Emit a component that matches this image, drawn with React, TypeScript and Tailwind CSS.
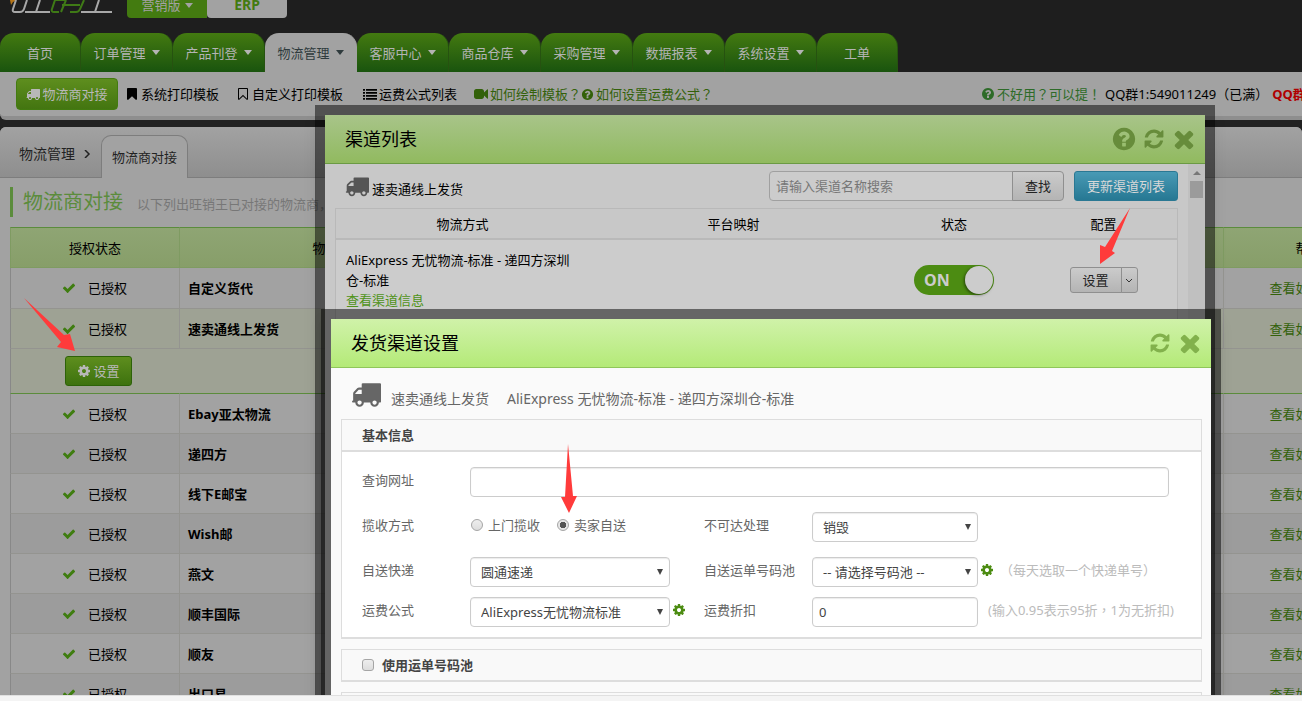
import type { ReactNode } from "react";

const icons = {
  check:
    "M1671 566q0 40-28 68l-724 724-136 136q-28 28-68 28t-68-28l-136-136-362-362q-28-28-28-68t28-68l136-136q28-28 68-28t68 28l294 295 656-657q28-28 68-28t68 28l136 136q28 28 28 68z",
  times:
    "M1490 1322q0 40-28 68l-136 136q-28 28-68 28t-68-28l-294-294-294 294q-28 28-68 28t-68-28l-136-136q-28-28-28-68t28-68l294-294-294-294q-28-28-28-68t28-68l136-136q28-28 68-28t68 28l294 294 294-294q28-28 68-28t68 28l136 136q28 28 28 68t-28 68l-294 294 294 294q28 28 28 68z",
  refresh:
    "M1639 1056q0 5-1 7-64 268-268 434.5t-478 166.5q-146 0-282.5-55t-243.5-157l-129 129q-19 19-45 19t-45-19-19-45v-448q0-26 19-45t45-19h448q26 0 45 19t19 45-19 45l-137 137q71 66 161 102t187 36q134 0 250-65t186-179q11-17 53-117 8-23 30-23h192q13 0 22.5 9.5t9.5 22.5zm25-800v448q0 26-19 45t-45 19h-448q-26 0-45-19t-19-45 19-45l138-138q-148-137-349-137-134 0-250 65t-186 179q-11 17-53 117-8 23-30 23h-199q-13 0-22.5-9.5t-9.5-22.5v-7q65-268 270-434.5t480-166.5q146 0 284 55.5t245 156.5l130-129q19-19 45-19t45 19 19 45z",
  cog:
    "M1152 896q0-106-75-181t-181-75-181 75-75 181 75 181 181 75 181-75 75-181zm512-109v222q0 12-8 23t-20 13l-185 28q-19 54-39 91 35 50 107 138 10 12 10 25t-9 23q-27 37-99 108t-94 71q-12 0-26-9l-138-108q-44 23-91 38-16 136-29 186-7 28-36 28h-222q-14 0-24.5-8.5t-11.5-21.5l-28-184q-49-16-90-37l-141 107q-10 9-25 9-14 0-25-11-126-114-165-168-7-10-7-23 0-12 8-23 15-21 51-66.5t54-70.5q-27-50-41-99l-183-27q-13-2-21-12.5t-8-23.5v-222q0-12 8-23t19-13l186-28q14-46 39-92-40-57-107-138-10-12-10-24 0-10 9-23 26-36 98.5-107.5t94.5-71.5q13 0 26 10l138 107q44-23 91-38 16-136 29-186 7-28 36-28h222q14 0 24.5 8.5t11.5 21.5l28 184q49 16 90 37l142-107q9-9 24-9 13 0 25 10 129 119 165 170 7 8 7 22 0 12-8 23-15 21-51 66.5t-54 70.5q26 50 41 98l183 28q13 2 21 12.5t8 23.5z",
  question:
    "M1024 1376v-192q0-14-9-23t-23-9h-192q-14 0-23 9t-9 23v192q0 14 9 23t23 9h192q14 0 23-9t9-23zm256-672q0-88-55.5-163t-138.5-116-170-41q-243 0-371 213-15 24 8 42l132 100q7 6 19 6 16 0 25-12 53-68 86-92 34-24 86-24 48 0 85.5 26t37.5 59q0 38-20 61t-68 45q-63 28-115.5 86.5t-52.5 125.5v36q0 14 9 23t23 9h192q14 0 23-9t9-23q0-19 21.5-49.5t54.5-49.5q32-18 49-28.5t46-35 44.5-48 28-60.5 12.5-81zm384 192q0 209-103 385.5t-279.5 279.5-385.5 103-385.5-103-279.5-279.5-103-385.5 103-385.5 279.5-279.5 385.5-103 385.5 103 279.5 279.5 103 385.5z",
  truck:
    "M640 1408q0-52-38-90t-90-38-90 38-38 90 38 90 90 38 90-38 38-90zm-384-512h384v-256h-158q-13 0-22 9l-195 195q-9 9-9 22v30zm1280 512q0-52-38-90t-90-38-90 38-38 90 38 90 90 38 90-38 38-90zm256-1088v1024q0 15-4 26.5t-13.5 18.5-16.5 11.5-23.5 6-22.5 2-25.5 0-22.5-.5q0 106-75 181t-181 75-181-75-75-181h-384q0 106-75 181t-181 75-181-75-75-181h-64q-3 0-22.5.5t-25.5 0-22.5-2-23.5-6-16.5-11.5-13.5-18.5-4-26.5q0-26 19-45t45-19v-320q0-8-.5-35t0-38 2.5-34.5 6.5-37 14-30.5 22.5-30l198-198q19-19 50.5-32t58.5-13h160v-192q0-26 19-45t45-19h1024q26 0 45 19t19 45z",
  bookmark:
    "M1420 128q23 0 44 9 33 13 52.5 41t19.5 62v1289q0 34-19.5 62t-52.5 41q-19 8-44 8-48 0-83-32l-441-424-441 424q-36 33-83 33-23 0-44-9-33-13-52.5-41t-19.5-62v-1289q0-34 19.5-62t52.5-41q21-9 44-9h1048z",
  bookmarkOpen:
    "M1408 256h-1024v1242l423-406 89-85 89 85 423 406v-1242zm12-128q23 0 44 9 33 13 52.5 41t19.5 62v1289q0 34-19.5 62t-52.5 41q-19 8-44 8-48 0-83-32l-441-424-441 424q-36 33-83 33-23 0-44-9-33-13-52.5-41t-19.5-62v-1289q0-34 19.5-62t52.5-41q21-9 44-9h1048z",
  list:
    "M0 256h256v224h-256zM0 640h256v224h-256zM0 1024h256v224h-256zM0 1408h256v224h-256zM384 256h1408v224h-1408zM384 640h1408v224h-1408zM384 1024h1408v224h-1408zM384 1408h1408v224h-1408z",
  video:
    "M1792 352v1088q0 42-39 59-13 5-25 5-27 0-45-19l-403-403v166q0 119-84.5 203.5t-203.5 84.5h-704q-119 0-203.5-84.5t-84.5-203.5v-704q0-119 84.5-203.5t203.5-84.5h704q119 0 203.5 84.5t84.5 203.5v165l403-402q18-19 45-19 12 0 25 5 39 17 39 59z",
};

function Icon({ name, className = "size-3.5" }: { name: keyof typeof icons; className?: string }) {
  return (
    <svg viewBox="0 0 1792 1792" fill="currentColor" aria-hidden="true" className={`shrink-0 ${className}`}>
      <path d={icons[name]} />
    </svg>
  );
}

function Caret({ className = "" }: { className?: string }) {
  return (
    <svg viewBox="0 0 8 5" fill="currentColor" aria-hidden="true" className={`h-[5px] w-2 shrink-0 ${className}`}>
      <path d="M0 0h8L4 5z" />
    </svg>
  );
}

const navTabs = [
  { label: "首页", menu: false },
  { label: "订单管理", menu: true },
  { label: "产品刊登", menu: true },
  { label: "物流管理", menu: true, active: true },
  { label: "客服中心", menu: true },
  { label: "商品仓库", menu: true },
  { label: "采购管理", menu: true },
  { label: "数据报表", menu: true },
  { label: "系统设置", menu: true },
  { label: "工单", menu: false },
];

const carriers = [
  "自定义货代",
  "速卖通线上发货",
  "Ebay亚太物流",
  "递四方",
  "线下E邮宝",
  "Wish邮",
  "燕文",
  "顺丰国际",
  "顺友",
  "出口易",
];

function Header() {
  return (
    <header className="shrink-0 bg-[#1e1e1e]">
      <div className="flex h-[33px] items-start">
        <svg viewBox="0 0 127 18" className="h-[18px] w-[127px] shrink-0" fill="none" role="img" aria-label="旺销王">
          <path d="M10 0h7l-4 2-2 3z" fill="#b5761a" />
          <g stroke="#a8a8a8" strokeWidth="2">
            <path d="M16 0l-3 9q-1 3 2 3h5q3 0 4-3l3-9" />
            <path d="M25 12h25M40 0l-4 12" />
            <path d="M81 12h31M99 0l-4 12" />
          </g>
          <path
            d="M55 0l-3 9q-1 3 2 3h5M66 0l-5 12M62 5h18M84 0l-4 9q-1 3-4 3h-6M55 0h10"
            stroke="#3f7a16"
            strokeWidth="2"
          />
        </svg>
        <div className="flex h-[18px] items-end">
          <button className="flex h-[26px] w-20 items-center justify-center gap-1 rounded-bl bg-[#437b10] text-[#a2a2a2]">
            营销版 <Caret />
          </button>
          <button className="h-[26px] w-20 rounded-b bg-[#a2a2a2] text-sm font-bold text-[#437b10]">ERP</button>
        </div>
      </div>
      <nav className="flex">
        {navTabs.map((tab) => (
          <a
            key={tab.label}
            href="#"
            className={`flex h-[39px] shrink-0 items-center justify-center gap-1.5 rounded-t-[14px] border-r ${
              tab.menu ? "w-[92px]" : "w-[81px]"
            } ${
              tab.active
                ? "border-[#a2a2a2] bg-[#a2a2a2] text-[#2f3b3d]"
                : "border-[#265210] bg-linear-to-b from-[#437a10] to-[#19540e] text-[#b4b4b4]"
            }`}
          >
            {tab.label}
            {tab.menu && <Caret />}
          </a>
        ))}
      </nav>
    </header>
  );
}

function Toolbar() {
  return (
    <div className="flex h-12 shrink-0 items-center rounded-bl-md border-b-4 border-[#8e8e8e] bg-[#a2a2a2] pl-4 whitespace-nowrap text-black">
      <a
        href="#"
        className="flex h-8 w-[102px] shrink-0 items-center justify-center gap-0.5 rounded border border-[#437b10] bg-linear-to-b from-[#5e8e1e] to-[#437510] text-[#b8b8b8]"
      >
        <Icon name="truck" />
        物流商对接
      </a>
      <a href="#" className="ml-[7px] flex items-center gap-0.5">
        <Icon name="bookmark" /> 系统打印模板
      </a>
      <a href="#" className="ml-[17px] flex items-center gap-0.5">
        <Icon name="bookmarkOpen" /> 自定义打印模板
      </a>
      <a href="#" className="ml-5 flex items-center gap-0.5">
        <Icon name="list" /> 运费公式列表
      </a>
      <a href="#" className="ml-[17px] flex items-center gap-0.5 text-[#33610a]">
        <Icon name="video" />
        <span>
          如何绘制模板<span className="font-['Noto_Sans_CJK_TC']">？</span>
        </span>
      </a>
      <a href="#" className="flex items-center gap-0.5 text-[#33610a]">
        <Icon name="question" className="size-[13px]" />
        <span>
          如何设置运费公式<span className="font-['Noto_Sans_CJK_TC']">？</span>
        </span>
      </a>
      <div className="ml-auto flex w-[321px] shrink-0 items-center gap-1">
        <a href="#" className="flex shrink-0 items-center gap-0.5 text-[#2d6b28]">
          <Icon name="question" />
          <span>
            不好用<span className="font-['Noto_Sans_CJK_TC']">？</span>可以提
            <span className="font-['Noto_Sans_CJK_TC']">！</span>
          </span>
        </a>
        <span className="shrink-0">QQ群1:549011249（已满）</span>
        <b className="shrink-0 text-[#b00000]">QQ群</b>
      </div>
    </div>
  );
}

function CarrierRow({ name, index }: { name: string; index: number }) {
  const tone =
    name === "速卖通线上发货" ? "bg-[#9ea294]" : index % 2 ? "bg-[#9c9c9c]" : "bg-[#a2a2a2]";
  const line =
    index === 0 ? "" : name === "Ebay亚太物流" ? "border-t border-[#5b8c3c]" : "border-t border-[#949490]";
  const cell = `h-10 ${line}`;

  return (
    <tr className={tone}>
      <td className={`${cell} border-l border-l-[#888]`}>
        <span className="flex items-center gap-3 pl-[51px]">
          <Icon name="check" className="size-3.5 text-[#3f7d10]" />
          已授权
        </span>
      </td>
      <td className={`${cell} border-l border-l-[#949490] pl-2 font-bold`}>{name}</td>
      <td className={cell} />
      <td className={`${cell} border-l border-l-[#949490] text-center`}>
        <a href="#" className="text-[#33610a]">查看如何授权</a>
      </td>
    </tr>
  );
}

function CarrierPanel() {
  return (
    <main className="mt-[7px] flex-1 rounded-t-md bg-[#a2a2a2]">
      <div className="flex h-[51px] items-end rounded-t-md border-b border-[#7d7d7d] bg-linear-to-b from-[#a2a2a2] to-[#8e8e8e] pl-[19px]">
        <div className="flex h-[46px] items-center gap-2 text-sm text-[#222]">
          物流管理
          <svg viewBox="0 0 8 8" className="size-2" fill="none" stroke="currentColor" strokeWidth="1.5" aria-hidden="true">
            <path d="M2 0l4 4-4 4" />
          </svg>
        </div>
        <div className="-mb-px ml-2.5 flex h-[43px] w-[87px] items-center justify-center rounded-t-[10px] border border-b-0 border-[#7d7d7d] bg-[#a2a2a2] text-[#222]">
          物流商对接
        </div>
      </div>
      <div className="px-2.5 pt-[9px]">
        <div className="flex h-[30px] items-center gap-3.5 border-l-3 border-[#5b8c3c] pl-2.5 whitespace-nowrap">
          <h1 className="text-xl text-[#5b8c3c]">物流商对接</h1>
          <p className="pt-1 text-[#777]">以下列出旺销王已对接的物流商，</p>
        </div>
        <table className="mt-2.5 w-[1383px] table-fixed border-separate border-spacing-0">
          <colgroup>
            <col className="w-[169px]" />
            <col className="w-[305px]" />
            <col />
            <col className="w-[170px]" />
          </colgroup>
          <thead>
            <tr className="bg-linear-to-b from-[#8fa574] to-[#879e69]">
              {["授权状态", "物流商", "", "帮助"].map((title, i) => (
                <th
                  key={i}
                  className={`h-[41px] border-y border-t-[#5b8c3c] border-b-[#7f9b62] font-normal ${
                    i === 2 ? "" : "border-l border-l-[#7f9b62]"
                  }`}
                >
                  {title}
                </th>
              ))}
            </tr>
          </thead>
          <tbody>
            {carriers.slice(0, 2).map((name, i) => (
              <CarrierRow key={name} name={name} index={i} />
            ))}
            <tr className="bg-[#9ea294]">
              <td colSpan={4} className="h-[45px] border-t border-l border-t-[#949490] border-l-[#888] pl-[54px]">
                <button className="flex h-[30px] w-[67px] items-center justify-center gap-0.5 rounded-[3px] border border-[#2d6208] bg-linear-to-b from-[#5e8e1e] to-[#3d720e] text-[#b8b8b8]">
                  <Icon name="cog" />
                  设置
                </button>
              </td>
            </tr>
            {carriers.slice(2).map((name, i) => (
              <CarrierRow key={name} name={name} index={i + 2} />
            ))}
          </tbody>
        </table>
      </div>
    </main>
  );
}

interface ModalHeadProps {
  title: string;
  className: string;
  iconClass: string;
  help?: boolean;
}

function ModalHead({ title, className, iconClass, help }: ModalHeadProps) {
  return (
    <div className={`flex h-[49px] shrink-0 items-center border-b bg-linear-to-b pr-1.5 pl-5 ${className}`}>
      <h2 className="flex-1 text-lg text-black">{title}</h2>
      <div className={`flex ${iconClass}`}>
        {help && (
          <button aria-label="帮助" className="flex w-[30px] items-center justify-center">
            <Icon name="question" className="size-[26px]" />
          </button>
        )}
        <button aria-label="刷新" className="flex w-[30px] items-center justify-center">
          <Icon name="refresh" className="size-[22px]" />
        </button>
        <button aria-label="关闭" className="flex w-[30px] items-center justify-center">
          <Icon name="times" className="size-7" />
        </button>
      </div>
    </div>
  );
}

function ChannelListModal() {
  return (
    <section className="absolute top-[105px] left-[315px] flex h-[600px] w-[900px] flex-col border-10 border-black/50 bg-[#c8c8c8] bg-clip-padding text-black shadow-lg">
      <ModalHead
        title="渠道列表"
        className="border-[#6b9a44] from-[#a8c489] to-[#91ba5f]"
        iconClass="text-[#678c3b]"
        help
      />
      <div className="flex flex-1">
        <div className="flex-1 pr-2.5 pl-2.5">
          <div className="flex h-11 items-center pl-2.5">
            <Icon name="truck" className="size-6 text-[#555]" />
            <span className="ml-[3px] pt-1.5">速卖通线上发货</span>
            <form className="ml-auto flex">
              <input
                type="text"
                aria-label="渠道名称"
                placeholder="请输入渠道名称搜索"
                className="h-[30px] w-[244px] rounded-l border border-[#a0a0a0] bg-[#ccc] px-1.5 placeholder:text-[#777]"
              />
              <button
                type="button"
                className="-ml-px h-[30px] w-[52px] rounded-r border border-[#8f8f8f] bg-linear-to-b from-[#cbcbcb] to-[#b4b4b4] text-[#222]"
              >
                查找
              </button>
            </form>
            <button className="ml-2.5 h-[30px] w-[104px] rounded-[3px] border border-[#2a7893] bg-linear-to-b from-[#489ab5] to-[#267893] text-[#d8d8d8]">
              更新渠道列表
            </button>
          </div>
          <table className="w-full table-fixed border-separate border-spacing-0 border-x border-t border-[#b9b9b9]">
            <colgroup>
              <col className="w-[253px]" />
              <col />
              <col className="w-[152px]" />
              <col className="w-[147px]" />
            </colgroup>
            <thead>
              <tr>
                {["物流方式", "平台映射", "状态", "配置"].map((title) => (
                  <th key={title} className="h-[31px] border-b-2 border-[#b9b9b9] font-normal">
                    {title}
                  </th>
                ))}
              </tr>
            </thead>
            <tbody>
              <tr className="bg-[#ccc]">
                <td className="px-2.5 py-2.5 leading-5">
                  AliExpress 无忧物流-标准 - 递四方深圳仓-标准
                  <br />
                  <a href="#" className="text-[#4f9318]">查看渠道信息</a>
                </td>
                <td />
                <td>
                  <button
                    role="switch"
                    aria-checked="true"
                    className="mx-auto flex h-[30px] w-20 items-center justify-between rounded-full bg-[#4c8c12] pr-px pl-2.5 text-base font-bold text-[#ccc]"
                  >
                    ON
                    <span className="size-7 rounded-full bg-[#ccc] shadow-[-1px_1px_3px_rgba(0,0,0,0.5)]" />
                  </button>
                </td>
                <td>
                  <div className="flex justify-center text-[#222]">
                    <button className="h-[26px] w-[52px] rounded-l-[3px] border border-[#8f8f8f] bg-linear-to-b from-[#cbcbcb] to-[#b4b4b4]">
                      设置
                    </button>
                    <button
                      aria-label="更多"
                      className="-ml-px flex h-[26px] w-[17px] items-center justify-center rounded-r-[3px] border border-[#8f8f8f] bg-linear-to-b from-[#cbcbcb] to-[#b4b4b4]"
                    >
                      <svg viewBox="0 0 8 8" className="size-2" fill="none" stroke="#333" aria-hidden="true">
                        <path d="M1 3l3 3 3-3" />
                      </svg>
                    </button>
                  </div>
                </td>
              </tr>
            </tbody>
          </table>
        </div>
        <div className="flex w-[17px] flex-col items-center bg-[#c0c0c0]">
          <svg viewBox="0 0 8 4" className="mt-[7px] h-1 w-2" fill="#777" aria-hidden="true">
            <path d="M4 0l4 4H0z" />
          </svg>
          <div className="mt-1.5 h-[17px] w-[13px] bg-[#9b9b9b]" />
        </div>
      </div>
    </section>
  );
}

interface SelectBoxProps {
  id: string;
  value: string;
  className: string;
}

function SelectBox({ id, value, className }: SelectBoxProps) {
  return (
    <div className={`relative ${className}`}>
      <select
        id={id}
        className="h-[30px] w-full appearance-none rounded border border-[#ccc] bg-white px-2.5 text-[#444] shadow-[inset_0_1px_1px_rgba(0,0,0,0.08)]"
      >
        <option>{value}</option>
      </select>
      <svg
        viewBox="0 0 6 6"
        className="pointer-events-none absolute top-3 right-[7px] size-1.5"
        fill="#444"
        aria-hidden="true"
      >
        <path d="M0 0h6L3 6z" />
      </svg>
    </div>
  );
}

function FieldLabel({ htmlFor, children }: { htmlFor: string; children: ReactNode }) {
  return (
    <label htmlFor={htmlFor} className="leading-[26px]">
      {children}
    </label>
  );
}

function Radio({ label, checked }: { label: string; checked?: boolean }) {
  return (
    <label className="flex items-center gap-[5px]">
      <input
        type="radio"
        name="pickup"
        defaultChecked={checked}
        className="size-3 appearance-none rounded-full border border-[#a5a5a5] bg-linear-to-b from-[#eee] to-[#ddd] checked:bg-[radial-gradient(circle,#555_0_3px,#e6e6e6_3px)]"
      />
      {label}
    </label>
  );
}

const textInput =
  "h-[30px] rounded border border-[#ccc] bg-white px-1.5 text-[#444] shadow-[inset_0_1px_1px_rgba(0,0,0,0.08)]";

function ChannelSettingsModal() {
  return (
    <section className="absolute top-[309px] left-[321px] h-[520px] w-[900px] border-10 border-black/50 bg-[#fafafa] bg-clip-padding text-[#666] shadow-lg">
      <ModalHead
        title="发货渠道设置"
        className="border-[#8fc65a] from-[#d0f2a9] to-[#b4ea77]"
        iconClass="text-[#82b14c]"
      />
      <div className="pr-[9px] pl-2.5">
        <div className="flex h-[51px] items-center pl-2.5 text-sm">
          <Icon name="truck" className="size-[30px]" />
          <span className="ml-2.5 pt-2.5">速卖通线上发货</span>
          <span className="ml-[18px] pt-2.5">AliExpress 无忧物流-标准 - 递四方深圳仓-标准</span>
        </div>

        <div className="border border-b-2 border-[#ddd] bg-white">
          <h3 className="flex h-8 items-center border-b-2 border-[#ddd] bg-[#f9f9f9] pl-5 font-bold text-[#444]">
            基本信息
          </h3>
          <div className="grid grid-cols-[108px_234px_108px_minmax(0,1fr)] pt-[15px] pr-8 pb-2.5 pl-5 whitespace-nowrap">
            <FieldLabel htmlFor="url">查询网址</FieldLabel>
            <input id="url" type="text" className={`col-span-3 mb-[15px] ${textInput}`} />

            <span className="leading-[26px]">揽收方式</span>
            <div className="flex h-[26px] items-center gap-[17px] pl-px">
              <Radio label="上门揽收" />
              <Radio label="卖家自送" checked />
            </div>
            <FieldLabel htmlFor="undeliverable">不可达处理</FieldLabel>
            <SelectBox id="undeliverable" value="销毁" className="mb-[15px] w-[166px]" />

            <FieldLabel htmlFor="express">自送快递</FieldLabel>
            <SelectBox id="express" value="圆通速递" className="mb-2.5 w-[200px]" />
            <FieldLabel htmlFor="pool">自送运单号码池</FieldLabel>
            <div className="flex items-start">
              <SelectBox id="pool" value="-- 请选择号码池 --" className="w-[166px] shrink-0" />
              <Icon name="cog" className="mt-1.5 ml-0.5 size-3.5 text-[#4c8c12]" />
              <span className="ml-1.5 leading-[26px] text-[#bbb]">（每天选取一个快递单号）</span>
            </div>

            <FieldLabel htmlFor="formula">运费公式</FieldLabel>
            <div className="flex items-start">
              <SelectBox id="formula" value="AliExpress无忧物流标准" className="w-[200px]" />
              <Icon name="cog" className="mt-1.5 ml-0.5 size-3.5 text-[#4c8c12]" />
            </div>
            <FieldLabel htmlFor="discount">运费折扣</FieldLabel>
            <div className="flex items-start">
              <input id="discount" type="text" defaultValue="0" className={`w-[166px] shrink-0 ${textInput}`} />
              <span className="ml-2.5 leading-[26px] text-[#bbb]">
                (输入0.95表示95折<span className="font-['Noto_Sans_CJK_TC']">，</span>1为无折扣)
              </span>
            </div>
          </div>
        </div>

        <div className="mt-2.5 border border-b-2 border-[#ddd] bg-[#f9f9f9]">
          <label className="flex h-[30px] items-center gap-2 pl-5 font-bold text-[#444]">
            <input
              type="checkbox"
              className="size-3 appearance-none rounded-[3px] border border-[#a5a5a5] bg-linear-to-b from-[#eee] to-[#ddd]"
            />
            使用运单号码池
          </label>
        </div>
        <div className="mt-2.5 h-8 border border-[#ddd] bg-[#f9f9f9]" />
      </div>
    </section>
  );
}

// Red pointers that mark the steps to follow
function Pointers() {
  return (
    <svg className="pointer-events-none absolute inset-0 size-full" fill="#ff3b3b" aria-hidden="true">
      <path d="M24 298L64 335 70 334 75 351 57 347 61 342z" />
      <path d="M1130 208L1112 251 1115 253 1100 264 1100 245 1105 247z" />
      <path d="M568 444L573 496 577 496 569 513 561 497 565 497z" />
    </svg>
  );
}

export default function App() {
  return (
    <div className="flex h-screen flex-col overflow-hidden font-['Noto_Sans','Noto_Sans_CJK_SC',sans-serif] text-[13px] leading-5">
      <div className="relative flex min-h-0 flex-1 flex-col overflow-hidden bg-[#222]">
        <Header />
        <Toolbar />
        <CarrierPanel />
        <ChannelListModal />
        <ChannelSettingsModal />
        <Pointers />
      </div>
      <footer className="h-1.5 shrink-0 border-t border-[#e0e0e0] bg-[#f4f4f4]" />
    </div>
  );
}
